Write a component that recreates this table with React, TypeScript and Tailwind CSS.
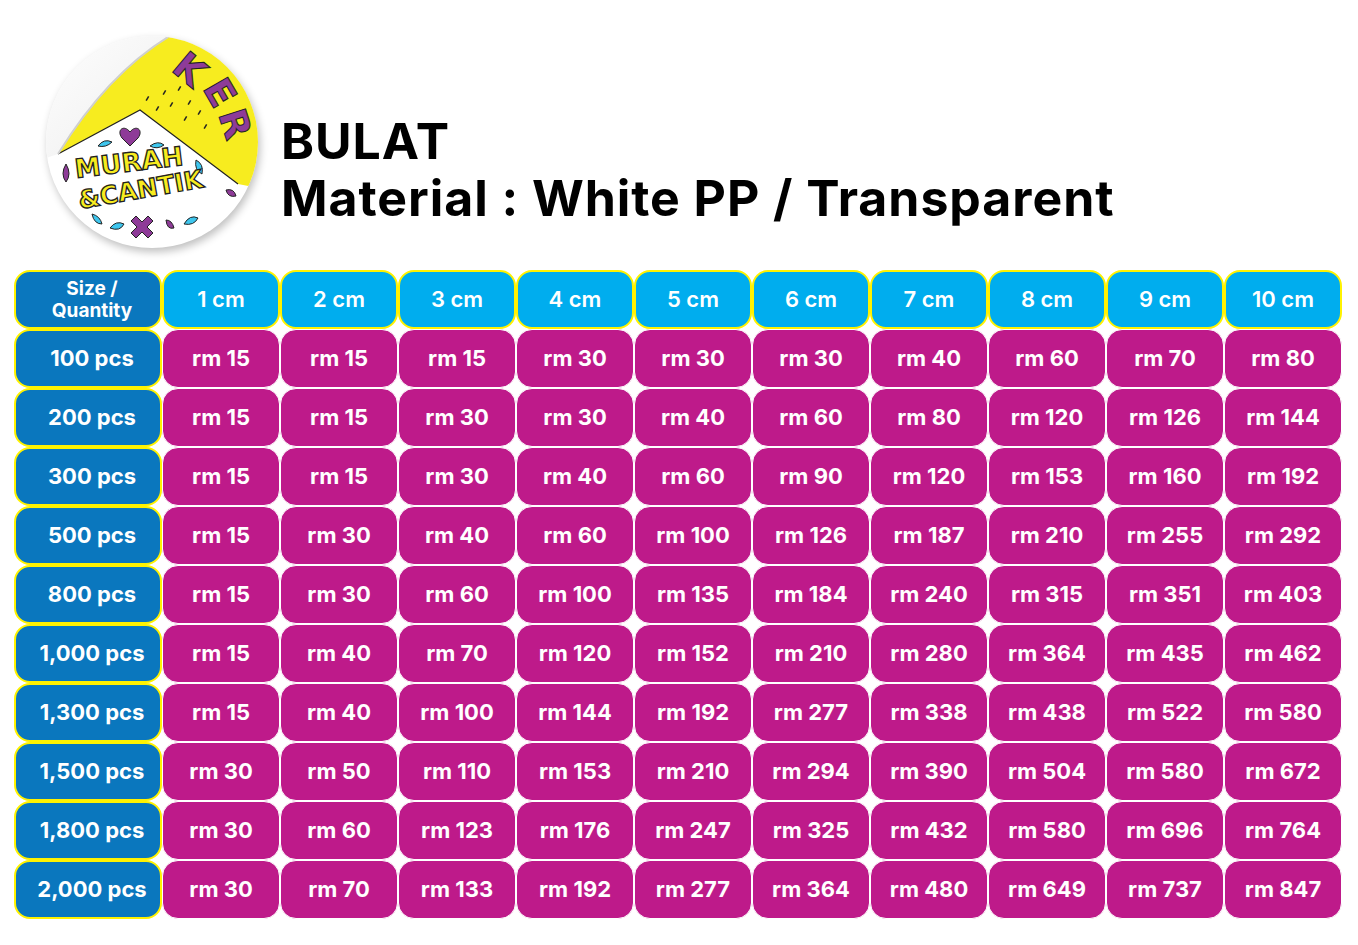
import React from "react";

const sizes = ["1 cm", "2 cm", "3 cm", "4 cm", "5 cm", "6 cm", "7 cm", "8 cm", "9 cm", "10 cm"];

const rows: [string, number[]][] = [
  ["100 pcs", [15, 15, 15, 30, 30, 30, 40, 60, 70, 80]],
  ["200 pcs", [15, 15, 30, 30, 40, 60, 80, 120, 126, 144]],
  ["300 pcs", [15, 15, 30, 40, 60, 90, 120, 153, 160, 192]],
  ["500 pcs", [15, 30, 40, 60, 100, 126, 187, 210, 255, 292]],
  ["800 pcs", [15, 30, 60, 100, 135, 184, 240, 315, 351, 403]],
  ["1,000 pcs", [15, 40, 70, 120, 152, 210, 280, 364, 435, 462]],
  ["1,300 pcs", [15, 40, 100, 144, 192, 277, 338, 438, 522, 580]],
  ["1,500 pcs", [30, 50, 110, 153, 210, 294, 390, 504, 580, 672]],
  ["1,800 pcs", [30, 60, 123, 176, 247, 325, 432, 580, 696, 764]],
  ["2,000 pcs", [30, 70, 133, 192, 277, 364, 480, 649, 737, 847]],
];

const Sticker = () => (
  <svg width="240" height="240" viewBox="0 0 240 240">
    <defs>
      <clipPath id="disc">
        <circle cx="122" cy="122" r="106" />
      </clipPath>
      <linearGradient id="flap" x1="0" y1="0" x2="1" y2="1">
        <stop offset="0" stopColor="#ffffff" />
        <stop offset="0.7" stopColor="#f2f2f2" />
        <stop offset="1" stopColor="#d9d9d9" />
      </linearGradient>
      <filter id="shadow" x="-20%" y="-20%" width="140%" height="140%">
        <feGaussianBlur stdDeviation="4" />
      </filter>
    </defs>
    <circle cx="124" cy="126" r="106" fill="#000" opacity="0.25" filter="url(#shadow)" />
    <circle cx="122" cy="122" r="106" fill="#fff" />
    <g clipPath="url(#disc)">
      <path d="M150 10 L240 10 L240 170 L208 164 L110 90 L28 134 C55 90 95 40 150 10 Z" fill="#f7ec1f" />
      <path d="M208 164 L110 90 L28 134" fill="none" stroke="#222" strokeWidth="1.2" />
      <path d="M150 10 C95 40 55 90 28 134 L10 140 L10 10 Z" fill="url(#flap)" />
      <path d="M150 10 C95 40 55 90 28 134" fill="none" stroke="#cfcfcf" strokeWidth="2" />
      {[
        [135, 70], [142, 82], [150, 66], [160, 80], [170, 90], [128, 86], [156, 96], [176, 104], [118, 76],
      ].map(([x, y], i) => (
        <rect key={i} x={x} y={y} width="1.5" height="5" fill="#222" transform={`rotate(30 ${x} ${y})`} />
      ))}
    </g>
    <g fontFamily="'DejaVu Sans', sans-serif" fontWeight="900" fill="#8e3b98" stroke="#222" strokeWidth="1" fontSize="38">
      <text x="140" y="50" transform="rotate(40 140 50)">K</text>
      <text x="172" y="68" transform="rotate(60 172 68)">E</text>
      <text x="188" y="94" transform="rotate(72 188 94)">R</text>
    </g>
    <path d="M100 112 c-6 -8 -14 -2 -8 6 l8 8 l8 -8 c6 -8 -2 -14 -8 -6 z" fill="#8e3b98" stroke="#222" strokeWidth="1" />
    <path d="M68 126 q6 -8 14 -4 q-6 6 -14 4 z" fill="#3ec6ee" stroke="#222" strokeWidth="1" />
    <path d="M120 126 q8 -6 14 -1 q-7 5 -14 1 z" fill="#3ec6ee" stroke="#222" strokeWidth="1" />
    <path d="M36 144 q-6 10 0 18 q6 -8 0 -18 z" fill="#8e3b98" stroke="#222" strokeWidth="1" />
    <path d="M166 140 q8 4 6 14 q-8 -4 -6 -14 z" fill="#3ec6ee" stroke="#222" strokeWidth="1" />
    <g fontFamily="'DejaVu Sans', sans-serif" fontWeight="700" fill="#f7ec1f" stroke="#222" strokeWidth="1.3">
      <text x="46" y="158" fontSize="26" transform="rotate(-7 46 158)">MURAH</text>
      <text x="50" y="189" fontSize="25" transform="rotate(-10 50 189)">&amp;CANTIK</text>
    </g>
    <path d="M196 170 q8 -2 10 6 q-8 2 -10 -6 z" fill="#8e3b98" stroke="#222" strokeWidth="1" />
    <path d="M80 208 q6 -8 14 -4 q-4 8 -14 4 z" fill="#3ec6ee" stroke="#222" strokeWidth="1" />
    <path d="M106 196 l6 6 l6 -6 l5 5 l-6 6 l6 6 l-5 5 l-6 -6 l-6 6 l-5 -5 l6 -6 l-6 -6 z" fill="#8e3b98" stroke="#222" strokeWidth="1" />
    <path d="M136 200 q6 0 8 8 q-7 2 -8 -8 z" fill="#8e3b98" stroke="#222" strokeWidth="1" />
    <path d="M154 204 q6 -10 14 -6 q-4 8 -14 6 z" fill="#3ec6ee" stroke="#222" strokeWidth="1" />
    <path d="M62 194 q8 2 10 10 q-8 0 -10 -10 z" fill="#3ec6ee" stroke="#222" strokeWidth="1" />
  </svg>
);

const Cell = ({ tone, children }: { tone: "dark" | "light" | "pink"; children: React.ReactNode }) => {
  const cls =
    tone === "dark"
      ? "bg-[#0a77be] border-[2px] border-[#fff200] pl-[8px]"
      : tone === "light"
      ? "bg-[#00adee] border-[2px] border-[#fff200]"
      : "bg-[#be1a8a] border-[1.5px] border-white";
  return (
    <div className={`h-[59px] rounded-[16px] flex items-center justify-center text-center text-white ${cls}`}>
      {children}
    </div>
  );
};

export default function App() {
  return (
    <div className="w-[1358px] h-[945px] bg-white font-['Inter',sans-serif]">
      <div className="h-[270px] pt-[20px] pl-[30px] flex">
        <Sticker />
        <div className="ml-[11px] mt-[93px] text-[50px] leading-[57px] font-bold text-black tracking-[0.95px]">
          <div>BULAT</div>
          <div>Material : White PP / Transparent</div>
        </div>
      </div>
      <div className="pl-[14px] grid grid-cols-[148px_repeat(10,118px)]">
        <Cell tone="dark">
          <span className="text-[19px] leading-[22px] font-bold">
            Size /<br />Quantity
          </span>
        </Cell>
        {sizes.map((s) => (
          <Cell key={s} tone="light">
            <span className="text-[22px] font-semibold">{s}</span>
          </Cell>
        ))}
        {rows.map(([qty, prices]) => (
          <React.Fragment key={qty}>
            <Cell tone="dark">
              <span className="text-[22px] font-bold">{qty}</span>
            </Cell>
            {prices.map((p, i) => (
              <Cell key={i} tone="pink">
                <span className="text-[22px] font-bold">rm {p}</span>
              </Cell>
            ))}
          </React.Fragment>
        ))}
      </div>
    </div>
  );
}
